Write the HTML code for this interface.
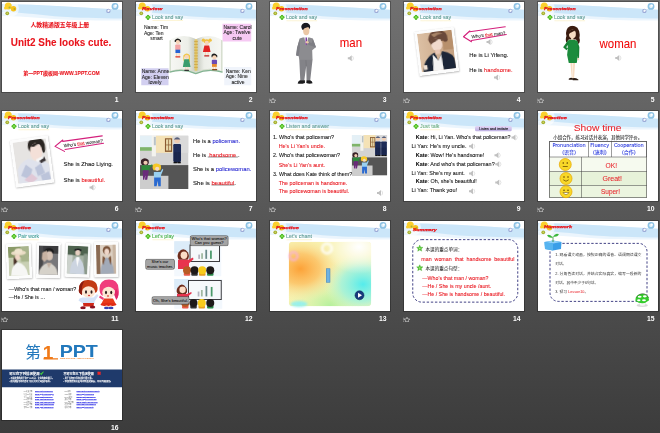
<!DOCTYPE html>
<html lang="en"><head><meta charset="utf-8"><title>Unit2 She looks cute - slide sorter</title>
<style>
html,body{margin:0;padding:0}
html{background:#3c3c3c}
body{width:660px;height:433px;overflow:hidden;position:relative;background:linear-gradient(#717171,#3c3c3c);font-family:"Liberation Sans","Noto Sans CJK SC",sans-serif}
.s{position:absolute;width:120px;height:90px;background:#fff;overflow:hidden;box-shadow:0 0 0 1px rgba(0,0,0,.27)}
.in{position:absolute;left:0;top:0;width:480px;height:360px;transform:scale(.25);transform-origin:0 0;overflow:hidden}
.a{position:absolute}
.t{position:absolute;white-space:nowrap;line-height:1.16;transform-origin:0 50%;-webkit-text-stroke:.3px currentColor}
.n{position:absolute;width:57px;text-align:right;color:#fff;font:bold 6.8px "Liberation Sans",sans-serif;line-height:9px;opacity:.99}
.r{color:#e8141c}.b{color:#2424d0}
</style></head>
<body>
<div class="s" style="left:2px;top:2px"><div class="in"><svg class="a" style="left:0;top:0" width="480" height="110" viewBox="0 0 480 110"><path d="M0 8C160 10 320 22 480 31V74C380 74 300 73 240 70C160 65 100 58 0 56Z" fill="#ebf5fd"/><path d="M0 8C160 10 320 22 480 31V66C380 65 300 63 240 59C160 53 100 43 0 40Z" fill="#cbe6f9"/><circle cx="34" cy="26" r="34" fill="#fff" opacity=".6"/><circle cx="452" cy="17.500" r="10.500" fill="#dceefa" stroke="#8cc2e4" stroke-width="6.500"/><circle cx="455" cy="14" r="4.500" fill="#fff"/><circle cx="425.500" cy="35.500" r="6.500" fill="#eef4fb" stroke="#9aa8d6" stroke-width="4.500"/><circle cx="428" cy="33" r="3" fill="#fff"/><circle cx="25" cy="16" r="14" fill="#fbd02e"/><circle cx="46" cy="27" r="11" fill="#f7c21c"/><circle cx="14" cy="24" r="6" fill="#fbd02e"/><circle cx="30" cy="22" r="4" fill="#a9b43a"/><circle cx="50" cy="28" r="4" fill="#b8a830"/><circle cx="21" cy="45" r="7.500" fill="#a4b030"/><circle cx="21" cy="45" r="3" fill="#d4d870"/></svg><div class="t" style="left:114px;top:78.4px;font-size:23.5px;color:#e8141c;font-weight:bold;">人教精通版五年级上册</div><div class="t" style="left:35px;top:139.8px;font-size:40px;color:#e8141c;font-weight:bold;transform:scaleX(0.994);">Unit2 She looks cute.</div><div class="t" style="left:85px;top:275.4px;font-size:20px;color:#e8141c;font-weight:bold;transform:scaleX(0.998);">第一PPT模板网-WWW.1PPT.COM</div></div></div><div class="n" style="left:61.5px;top:95.1px">1</div>
<div class="s" style="left:136px;top:2px"><div class="in"><svg class="a" style="left:0;top:0" width="480" height="110" viewBox="0 0 480 110"><path d="M0 8C160 10 320 22 480 31V74C380 74 300 73 240 70C160 65 100 58 0 56Z" fill="#ebf5fd"/><path d="M0 8C160 10 320 22 480 31V66C380 65 300 63 240 59C160 53 100 43 0 40Z" fill="#cbe6f9"/><circle cx="34" cy="26" r="34" fill="#fff" opacity=".6"/><circle cx="452" cy="17.500" r="10.500" fill="#dceefa" stroke="#8cc2e4" stroke-width="6.500"/><circle cx="455" cy="14" r="4.500" fill="#fff"/><circle cx="425.500" cy="35.500" r="6.500" fill="#eef4fb" stroke="#9aa8d6" stroke-width="4.500"/><circle cx="428" cy="33" r="3" fill="#fff"/><circle cx="25" cy="16" r="14" fill="#fbd02e"/><circle cx="46" cy="27" r="11" fill="#f7c21c"/><circle cx="14" cy="24" r="6" fill="#fbd02e"/><circle cx="30" cy="22" r="4" fill="#a9b43a"/><circle cx="50" cy="28" r="4" fill="#b8a830"/><circle cx="21" cy="45" r="7.500" fill="#a4b030"/><circle cx="21" cy="45" r="3" fill="#d4d870"/></svg><div class="t" style="left:24px;top:17.4px;font-size:14px;color:#e8141c;font-weight:bold;font-style:italic;transform:scaleX(1.679);-webkit-text-stroke:1px #e8141c;">Review</div><svg class="a" style="left:37px;top:50px" width="22" height="22" viewBox="0 0 22 22"><circle cx="11" cy="5.500" r="5" fill="#52be28"/><circle cx="11" cy="16.500" r="5" fill="#52be28"/><circle cx="5.500" cy="11" r="5" fill="#52be28"/><circle cx="16.500" cy="11" r="5" fill="#52be28"/><circle cx="11" cy="11" r="4" fill="#8be05a"/></svg><div class="t" style="left:64px;top:49.8px;font-size:21px;color:#5c9a92;transform:scaleX(0.993);border-bottom:2px dotted #f2d256;padding-bottom:0px;">Look and say</div><div class="a" style="left:346px;top:87px;width:115px;height:71px;background:#f6c9f3;"></div><div class="a" style="left:21px;top:265px;width:109px;height:68px;background:#d2cff0;"></div><div class="a" style="left:353px;top:260px;width:108px;height:73px;background:#f0f4fb;"></div><div class="t" style="left:32px;top:90px;font-size:20px;line-height:22px;color:#222;width:100px">Name: Tim<br>Age: Ten<br><span style="display:block;text-align:center">smart</span></div><div class="t" style="left:350px;top:89px;font-size:20px;line-height:22px;color:#222;width:110px">Name: Carol<br>Age: Twelve<br><span style="display:block;text-align:center">cute</span></div><div class="t" style="left:23px;top:267px;font-size:20px;line-height:22px;color:#222;width:106px">Name: Anne<br>Age: Eleven<br><span style="display:block;text-align:center">lovely</span></div><div class="t" style="left:359px;top:264px;font-size:20px;line-height:22px;color:#222;width:98px">Name: Ken<br>Age: Nine<br><span style="display:block;text-align:center">active</span></div><svg class="a" style="left:131px;top:120px" width="218" height="174" viewBox="0 0 226 182"><defs><linearGradient id="pl" x1="0" x2="1"><stop offset="0" stop-color="#f6f7f3"/><stop offset=".7" stop-color="#eceee8"/><stop offset="1" stop-color="#c6cac0"/></linearGradient><linearGradient id="pr" x1="1" x2="0"><stop offset="0" stop-color="#f6f7f3"/><stop offset=".7" stop-color="#eceee8"/><stop offset="1" stop-color="#c6cac0"/></linearGradient></defs><path d="M2 36Q60 6 112 32Q166 6 224 36V170Q166 152 112 176Q60 152 2 170Z" fill="#d4dccc"/><path d="M8 30Q62 4 110 28V164Q60 144 8 162Z" fill="url(#pl)"/><path d="M218 30Q164 4 116 28V164Q166 144 218 162Z" fill="url(#pr)"/><path d="M2 168Q60 150 112 174Q166 150 224 168" fill="none" stroke="#84b494" stroke-width="5"/><rect x="107" y="30" width="12" height="132" rx="3" fill="#e4c868"/><path d="M105 40h16M105 52h16M105 64h16M105 76h16M105 88h16M105 100h16M105 112h16M105 124h16M105 136h16M105 148h16" stroke="#c8a040" stroke-width="3"/><path d="M24 34Q36 20 50 34V42H24Z" fill="#1c1c1c"/><circle cx="37" cy="42" r="9" fill="#f8d4b8"/><rect x="26" y="52" width="22" height="24" rx="4" fill="#f2a4a4"/><rect x="27" y="74" width="20" height="14" fill="#2462d4"/><rect x="30" y="88" width="5" height="14" fill="#f8d4b8"/><rect x="40" y="88" width="5" height="14" fill="#f8d4b8"/><rect x="26" y="101" width="22" height="6" rx="3" fill="#e03020"/><path d="M60 98Q74 82 88 98V124H82V104H64V120H60Z" fill="#f0c848"/><circle cx="74" cy="104" r="9" fill="#f8d4b8"/><path d="M64 114H84L90 146H58Z" fill="#3a9c6c"/><rect x="68" y="146" width="4" height="14" fill="#f8d4b8"/><rect x="77" y="146" width="4" height="14" fill="#f8d4b8"/><rect x="64" y="158" width="20" height="5" rx="2" fill="#333"/><circle cx="144" cy="34" r="7" fill="#f0c040"/><circle cx="172" cy="34" r="7" fill="#f0c040"/><path d="M146 36Q158 24 170 36V46H146Z" fill="#f0c040"/><circle cx="158" cy="46" r="9" fill="#f8d4b8"/><path d="M148 56H168L174 84H142Z" fill="#e22424"/><rect x="150" y="84" width="5" height="14" fill="#f8d4b8"/><rect x="161" y="84" width="5" height="14" fill="#f8d4b8"/><rect x="147" y="97" width="22" height="5" rx="2" fill="#c02020"/><path d="M178 96Q190 84 202 98V106H178Z" fill="#1c1c1c"/><circle cx="190" cy="106" r="9" fill="#f8d4b8"/><rect x="179" y="116" width="22" height="20" rx="4" fill="#6c4cb4"/><rect x="180" y="134" width="20" height="12" fill="#e88a2c"/><rect x="183" y="146" width="5" height="10" fill="#f8d4b8"/><rect x="193" y="146" width="5" height="10" fill="#f8d4b8"/><rect x="180" y="155" width="22" height="5" rx="2" fill="#8a4a20"/></svg></div></div><div class="n" style="left:195.5px;top:95.1px">2</div>
<div class="s" style="left:270px;top:2px"><div class="in"><svg class="a" style="left:0;top:0" width="480" height="110" viewBox="0 0 480 110"><path d="M0 8C160 10 320 22 480 31V74C380 74 300 73 240 70C160 65 100 58 0 56Z" fill="#ebf5fd"/><path d="M0 8C160 10 320 22 480 31V66C380 65 300 63 240 59C160 53 100 43 0 40Z" fill="#cbe6f9"/><circle cx="34" cy="26" r="34" fill="#fff" opacity=".6"/><circle cx="452" cy="17.500" r="10.500" fill="#dceefa" stroke="#8cc2e4" stroke-width="6.500"/><circle cx="455" cy="14" r="4.500" fill="#fff"/><circle cx="425.500" cy="35.500" r="6.500" fill="#eef4fb" stroke="#9aa8d6" stroke-width="4.500"/><circle cx="428" cy="33" r="3" fill="#fff"/><circle cx="25" cy="16" r="14" fill="#fbd02e"/><circle cx="46" cy="27" r="11" fill="#f7c21c"/><circle cx="14" cy="24" r="6" fill="#fbd02e"/><circle cx="30" cy="22" r="4" fill="#a9b43a"/><circle cx="50" cy="28" r="4" fill="#b8a830"/><circle cx="21" cy="45" r="7.500" fill="#a4b030"/><circle cx="21" cy="45" r="3" fill="#d4d870"/></svg><div class="t" style="left:24px;top:17.4px;font-size:14px;color:#e8141c;font-weight:bold;font-style:italic;transform:scaleX(1.498);-webkit-text-stroke:1px #e8141c;">Presentation</div><svg class="a" style="left:37px;top:50px" width="22" height="22" viewBox="0 0 22 22"><circle cx="11" cy="5.500" r="5" fill="#52be28"/><circle cx="11" cy="16.500" r="5" fill="#52be28"/><circle cx="5.500" cy="11" r="5" fill="#52be28"/><circle cx="16.500" cy="11" r="5" fill="#52be28"/><circle cx="11" cy="11" r="4" fill="#8be05a"/></svg><div class="t" style="left:64px;top:49.8px;font-size:21px;color:#5c9a92;transform:scaleX(0.993);border-bottom:2px dotted #f2d256;padding-bottom:0px;">Look and say</div><svg class="a" style="left:100px;top:82px" width="86" height="248" viewBox="0 0 130 372"><ellipse cx="65" cy="24" rx="27" ry="24" fill="#1a1a20"/><ellipse cx="68" cy="48" rx="19" ry="27" fill="#ecc8a6"/><path d="M44 30Q60 8 92 26Q78 24 66 30Q54 32 46 46Z" fill="#1a1a20"/><path d="M28 96Q66 80 108 96L126 148 104 166 106 226H26L22 200 8 196 14 150Z" fill="#8c8c90"/><path d="M56 86H80L72 130H64Z" fill="#f6f6f6"/><path d="M64 90H72L74 128 68 136 63 128Z" fill="#7c3aa0"/><path d="M108 98 128 150 84 134 70 122 78 112 100 124Z" fill="#7e7e84"/><ellipse cx="74" cy="118" rx="9" ry="8" fill="#ecc8a6"/><path d="M28 98 12 152 6 198 22 202 30 150Z" fill="#7e7e84"/><path d="M26 224H106L92 350H70L68 262 56 350H32Z" fill="#838388"/><path d="M66 226 68 262" stroke="#6c6c70" stroke-width="3"/><path d="M30 348H60V364Q40 372 16 368Q18 352 30 348ZM70 348H92Q106 354 106 366Q86 372 68 364Z" fill="#1c1c1e"/></svg><div class="t" style="left:279px;top:138.3px;font-size:46px;color:#f00a0a;transform:scaleX(0.995) scaleY(1.1);">man</div><svg class="a" style="left:309px;top:212px" width="30" height="26" viewBox="0 0 30 26"><path d="M2 9h6l10-8v24l-10-8H2z" fill="#c0c0c0"/><path d="M21 4q8 9 0 18" fill="none" stroke="#d8d8d8" stroke-width="3"/></svg></div></div><div class="n" style="left:329.5px;top:95.1px">3</div><svg class="a" style="left:269px;top:97.8px" width="7" height="5.500" viewBox="0 0 14 11"><path d="M8 .5l1.700 3.500 3.800.4-2.800 2.600.8 3.800L8 8.800 4.500 10.800l.8-3.800L2.500 4.400l3.800-.4z" fill="none" stroke="#d8d8d8" stroke-width="1.300"/><path d="M0 2l3 1.500M0 5.500h2.500M0 9l2.500-1.200" stroke="#c8c8c8" stroke-width="1.100"/></svg>
<div class="s" style="left:404px;top:2px"><div class="in"><svg class="a" style="left:0;top:0" width="480" height="110" viewBox="0 0 480 110"><path d="M0 8C160 10 320 22 480 31V74C380 74 300 73 240 70C160 65 100 58 0 56Z" fill="#ebf5fd"/><path d="M0 8C160 10 320 22 480 31V66C380 65 300 63 240 59C160 53 100 43 0 40Z" fill="#cbe6f9"/><circle cx="34" cy="26" r="34" fill="#fff" opacity=".6"/><circle cx="452" cy="17.500" r="10.500" fill="#dceefa" stroke="#8cc2e4" stroke-width="6.500"/><circle cx="455" cy="14" r="4.500" fill="#fff"/><circle cx="425.500" cy="35.500" r="6.500" fill="#eef4fb" stroke="#9aa8d6" stroke-width="4.500"/><circle cx="428" cy="33" r="3" fill="#fff"/><circle cx="25" cy="16" r="14" fill="#fbd02e"/><circle cx="46" cy="27" r="11" fill="#f7c21c"/><circle cx="14" cy="24" r="6" fill="#fbd02e"/><circle cx="30" cy="22" r="4" fill="#a9b43a"/><circle cx="50" cy="28" r="4" fill="#b8a830"/><circle cx="21" cy="45" r="7.500" fill="#a4b030"/><circle cx="21" cy="45" r="3" fill="#d4d870"/></svg><div class="t" style="left:24px;top:17.4px;font-size:14px;color:#e8141c;font-weight:bold;font-style:italic;transform:scaleX(1.498);-webkit-text-stroke:1px #e8141c;">Presentation</div><svg class="a" style="left:37px;top:50px" width="22" height="22" viewBox="0 0 22 22"><circle cx="11" cy="5.500" r="5" fill="#52be28"/><circle cx="11" cy="16.500" r="5" fill="#52be28"/><circle cx="5.500" cy="11" r="5" fill="#52be28"/><circle cx="16.500" cy="11" r="5" fill="#52be28"/><circle cx="11" cy="11" r="4" fill="#8be05a"/></svg><div class="t" style="left:64px;top:49.8px;font-size:21px;color:#5c9a92;transform:scaleX(0.993);border-bottom:2px dotted #f2d256;padding-bottom:0px;">Look and say</div><div class="a" style="left:50.5px;top:109.0px;width:159px;height:178px;background:#fcfcfc;box-shadow:1px 3px 7px rgba(0,0,0,.32);transform:rotate(-7.1deg)"><svg style="position:absolute;left:10px;top:10px" width="139" height="154" viewBox="0 0 100 120" preserveAspectRatio="none"><defs><filter id="b4"><feGaussianBlur stdDeviation="1.8"/></filter><linearGradient id="l4" x1="0" x2="1"><stop offset="0" stop-color="#dcc0a4"/><stop offset="1" stop-color="#c4a080"/></linearGradient></defs><rect width="100" height="120" fill="url(#l4)"/><g filter="url(#b4)"><rect x="70" y="0" width="30" height="60" fill="#b8906c"/><path d="M30 22Q34 -6 62 -4Q90 0 86 30Q80 40 72 30L40 34Q34 40 30 22Z" fill="#6a4a3a"/><path d="M40 8Q56 -2 74 8Q60 6 48 16Z" fill="#a88468"/><ellipse cx="53" cy="40" rx="16" ry="20" fill="#f1d9cc"/><path d="M36 28Q50 14 72 24Q60 22 50 30Q42 32 36 40Z" fill="#6a4a3a"/><rect x="46" y="56" width="14" height="14" fill="#e8c8b6"/><path d="M6 124Q6 82 44 64L52 90 66 62Q100 72 100 100V124Z" fill="#1b2838"/><path d="M38 70 34 124H64L62 72 52 90Z" fill="#f4f4f4"/><rect x="8" y="100" width="10" height="14" fill="#f1e4d8"/></g></svg></div><svg class="a" style="left:0;top:0" width="480" height="360" viewBox="0 0 480 360"><path d="M263 116L238 139L270 159M263 119L405 99M270 154L409 130" fill="none" stroke="#d4207c" stroke-width="4.500" stroke-linecap="round" stroke-linejoin="round"/></svg><div class="t" style="left:270px;top:128.5px;font-size:18px;color:#222;transform:rotate(-6.5deg) scaleX(1.011);transform-origin:0 50%">Who's <span class="r" style="text-decoration:underline">that</span> man?</div><svg class="a" style="left:328px;top:147px" width="30" height="26" viewBox="0 0 30 26"><path d="M2 9h6l10-8v24l-10-8H2z" fill="#c0c0c0"/><path d="M21 4q8 9 0 18" fill="none" stroke="#d8d8d8" stroke-width="3"/></svg><div class="t" style="left:261px;top:198.5px;font-size:23.3px;color:#111;transform:scaleX(1.010);">He is Li Yifeng.</div><div class="t" style="left:261px;top:258.5px;font-size:23.3px;color:#111;transform:scaleX(0.990);">He is <span class="r">handsome.</span></div><svg class="a" style="left:358px;top:289px" width="30" height="26" viewBox="0 0 30 26"><path d="M2 9h6l10-8v24l-10-8H2z" fill="#c0c0c0"/><path d="M21 4q8 9 0 18" fill="none" stroke="#d8d8d8" stroke-width="3"/></svg></div></div><div class="n" style="left:463.5px;top:95.1px">4</div><svg class="a" style="left:403px;top:97.8px" width="7" height="5.500" viewBox="0 0 14 11"><path d="M8 .5l1.700 3.500 3.800.4-2.800 2.600.8 3.800L8 8.800 4.500 10.800l.8-3.800L2.500 4.400l3.800-.4z" fill="none" stroke="#d8d8d8" stroke-width="1.300"/><path d="M0 2l3 1.500M0 5.500h2.500M0 9l2.500-1.200" stroke="#c8c8c8" stroke-width="1.100"/></svg>
<div class="s" style="left:538px;top:2px"><div class="in"><svg class="a" style="left:0;top:0" width="480" height="110" viewBox="0 0 480 110"><path d="M0 8C160 10 320 22 480 31V74C380 74 300 73 240 70C160 65 100 58 0 56Z" fill="#ebf5fd"/><path d="M0 8C160 10 320 22 480 31V66C380 65 300 63 240 59C160 53 100 43 0 40Z" fill="#cbe6f9"/><circle cx="34" cy="26" r="34" fill="#fff" opacity=".6"/><circle cx="452" cy="17.500" r="10.500" fill="#dceefa" stroke="#8cc2e4" stroke-width="6.500"/><circle cx="455" cy="14" r="4.500" fill="#fff"/><circle cx="425.500" cy="35.500" r="6.500" fill="#eef4fb" stroke="#9aa8d6" stroke-width="4.500"/><circle cx="428" cy="33" r="3" fill="#fff"/><circle cx="25" cy="16" r="14" fill="#fbd02e"/><circle cx="46" cy="27" r="11" fill="#f7c21c"/><circle cx="14" cy="24" r="6" fill="#fbd02e"/><circle cx="30" cy="22" r="4" fill="#a9b43a"/><circle cx="50" cy="28" r="4" fill="#b8a830"/><circle cx="21" cy="45" r="7.500" fill="#a4b030"/><circle cx="21" cy="45" r="3" fill="#d4d870"/></svg><div class="t" style="left:24px;top:17.4px;font-size:14px;color:#e8141c;font-weight:bold;font-style:italic;transform:scaleX(1.498);-webkit-text-stroke:1px #e8141c;">Presentation</div><svg class="a" style="left:37px;top:50px" width="22" height="22" viewBox="0 0 22 22"><circle cx="11" cy="5.500" r="5" fill="#52be28"/><circle cx="11" cy="16.500" r="5" fill="#52be28"/><circle cx="5.500" cy="11" r="5" fill="#52be28"/><circle cx="16.500" cy="11" r="5" fill="#52be28"/><circle cx="11" cy="11" r="4" fill="#8be05a"/></svg><div class="t" style="left:64px;top:49.8px;font-size:21px;color:#5c9a92;transform:scaleX(0.993);border-bottom:2px dotted #f2d256;padding-bottom:0px;">Look and say</div><svg class="a" style="left:96px;top:94px" width="74" height="222" viewBox="0 0 110 335"><path d="M34 14Q60 -10 92 14Q112 40 104 76Q112 96 98 112L84 84H40L26 104Q18 84 26 64Q18 36 34 14Z" fill="#3a1c10"/><ellipse cx="62" cy="52" rx="21" ry="26" fill="#f8dcc2"/><path d="M38 40Q52 14 86 34Q70 32 58 40Q46 42 40 56Z" fill="#3a1c10"/><rect x="54" y="74" width="14" height="16" fill="#f8dcc2"/><path d="M32 90Q62 80 92 92L100 130 96 180 88 226H40L30 178 34 140Z" fill="#1c8c3c"/><path d="M34 92 6 132 26 150 36 138 24 132 40 110Z" fill="#178034"/><path d="M90 92 104 130 102 196 94 196 94 132Z" fill="#178034"/><ellipse cx="98" cy="202" rx="5" ry="8" fill="#f8dcc2"/><path d="M50 226H62L64 318H58ZM66 226H78L72 318H66Z" fill="#f8dcc2"/><path d="M40 322Q52 312 64 318V328H40ZM64 318Q80 314 98 326V330H64Z" fill="#2a1a12"/></svg><div class="t" style="left:246px;top:139.3px;font-size:46px;color:#f00a0a;transform:scaleX(0.998) scaleY(1.1);">woman</div><svg class="a" style="left:307px;top:211px" width="30" height="26" viewBox="0 0 30 26"><path d="M2 9h6l10-8v24l-10-8H2z" fill="#c0c0c0"/><path d="M21 4q8 9 0 18" fill="none" stroke="#d8d8d8" stroke-width="3"/></svg></div></div><div class="n" style="left:597.5px;top:95.1px">5</div><svg class="a" style="left:537px;top:97.8px" width="7" height="5.500" viewBox="0 0 14 11"><path d="M8 .5l1.700 3.500 3.800.4-2.800 2.600.8 3.800L8 8.800 4.500 10.800l.8-3.800L2.500 4.400l3.800-.4z" fill="none" stroke="#d8d8d8" stroke-width="1.300"/><path d="M0 2l3 1.500M0 5.500h2.500M0 9l2.500-1.200" stroke="#c8c8c8" stroke-width="1.100"/></svg>
<div class="s" style="left:2px;top:111px"><div class="in"><svg class="a" style="left:0;top:0" width="480" height="110" viewBox="0 0 480 110"><path d="M0 8C160 10 320 22 480 31V74C380 74 300 73 240 70C160 65 100 58 0 56Z" fill="#ebf5fd"/><path d="M0 8C160 10 320 22 480 31V66C380 65 300 63 240 59C160 53 100 43 0 40Z" fill="#cbe6f9"/><circle cx="34" cy="26" r="34" fill="#fff" opacity=".6"/><circle cx="452" cy="17.500" r="10.500" fill="#dceefa" stroke="#8cc2e4" stroke-width="6.500"/><circle cx="455" cy="14" r="4.500" fill="#fff"/><circle cx="425.500" cy="35.500" r="6.500" fill="#eef4fb" stroke="#9aa8d6" stroke-width="4.500"/><circle cx="428" cy="33" r="3" fill="#fff"/><circle cx="25" cy="16" r="14" fill="#fbd02e"/><circle cx="46" cy="27" r="11" fill="#f7c21c"/><circle cx="14" cy="24" r="6" fill="#fbd02e"/><circle cx="30" cy="22" r="4" fill="#a9b43a"/><circle cx="50" cy="28" r="4" fill="#b8a830"/><circle cx="21" cy="45" r="7.500" fill="#a4b030"/><circle cx="21" cy="45" r="3" fill="#d4d870"/></svg><div class="t" style="left:24px;top:17.4px;font-size:14px;color:#e8141c;font-weight:bold;font-style:italic;transform:scaleX(1.498);-webkit-text-stroke:1px #e8141c;">Presentation</div><svg class="a" style="left:37px;top:50px" width="22" height="22" viewBox="0 0 22 22"><circle cx="11" cy="5.500" r="5" fill="#52be28"/><circle cx="11" cy="16.500" r="5" fill="#52be28"/><circle cx="5.500" cy="11" r="5" fill="#52be28"/><circle cx="16.500" cy="11" r="5" fill="#52be28"/><circle cx="11" cy="11" r="4" fill="#8be05a"/></svg><div class="t" style="left:64px;top:49.8px;font-size:21px;color:#5c9a92;transform:scaleX(0.993);border-bottom:2px dotted #f2d256;padding-bottom:0px;">Look and say</div><div class="a" style="left:43.0px;top:106.6px;width:154px;height:190px;background:#fcfcfc;box-shadow:1px 3px 7px rgba(0,0,0,.32);transform:rotate(-7.8deg)"><svg style="position:absolute;left:10px;top:10px" width="134" height="166" viewBox="0 0 100 120" preserveAspectRatio="none"><defs><filter id="b6"><feGaussianBlur stdDeviation="1.8"/></filter></defs><rect width="100" height="120" fill="#e6e4e2"/><g filter="url(#b6)"><path d="M44 14Q48 -8 74 -6Q98 -2 94 30Q92 44 86 40L80 16Q64 10 54 20L52 36Q42 30 44 14Z" fill="#2b2523"/><ellipse cx="66" cy="36" rx="18" ry="26" fill="#f4e0d8"/><path d="M50 18Q64 4 88 14Q74 12 62 20Z" fill="#2b2523"/><path d="M4 124V80Q14 60 40 52L60 62 78 58 100 76V124Z" fill="#dfe2ec"/><path d="M12 98 30 68 48 84 36 112ZM56 80 76 70 84 98 62 106ZM70 104 96 96 100 120 74 124Z" fill="#bcc4da"/><path d="M20 112 44 96 60 112 40 124Z" fill="#e0c8d6"/><path d="M70 60 88 52 92 64 76 70Z" fill="#3a3438"/><path d="M62 58 84 50 86 56 66 66Z" fill="#f6f6f6"/></g></svg></div><svg class="a" style="left:0;top:0" width="480" height="360" viewBox="0 0 480 360"><path d="M243 116L212 141.5L250 161.5M243 121.5L401 99.6M252 154L406 129" fill="none" stroke="#d4207c" stroke-width="4.500" stroke-linecap="round" stroke-linejoin="round"/></svg><div class="t" style="left:247px;top:128.5px;font-size:18px;color:#222;transform:rotate(-7.3deg) scaleX(0.997);transform-origin:0 50%">Who's <span class="r" style="text-decoration:underline">that</span> woman?</div><div class="t" style="left:246px;top:198.5px;font-size:23.3px;color:#111;transform:scaleX(0.999);">She is Zhao Liying.</div><div class="t" style="left:246px;top:262.5px;font-size:23.3px;color:#111;transform:scaleX(1.007);">She is <span class="r">beautiful.</span></div><svg class="a" style="left:348px;top:293px" width="30" height="26" viewBox="0 0 30 26"><path d="M2 9h6l10-8v24l-10-8H2z" fill="#c0c0c0"/><path d="M21 4q8 9 0 18" fill="none" stroke="#d8d8d8" stroke-width="3"/></svg></div></div><div class="n" style="left:61.5px;top:204.1px">6</div><svg class="a" style="left:1px;top:206.8px" width="7" height="5.500" viewBox="0 0 14 11"><path d="M8 .5l1.700 3.500 3.800.4-2.800 2.600.8 3.800L8 8.800 4.500 10.800l.8-3.800L2.500 4.400l3.800-.4z" fill="none" stroke="#d8d8d8" stroke-width="1.300"/><path d="M0 2l3 1.500M0 5.500h2.500M0 9l2.500-1.200" stroke="#c8c8c8" stroke-width="1.100"/></svg>
<div class="s" style="left:136px;top:111px"><div class="in"><svg class="a" style="left:0;top:0" width="480" height="110" viewBox="0 0 480 110"><path d="M0 8C160 10 320 22 480 31V74C380 74 300 73 240 70C160 65 100 58 0 56Z" fill="#ebf5fd"/><path d="M0 8C160 10 320 22 480 31V66C380 65 300 63 240 59C160 53 100 43 0 40Z" fill="#cbe6f9"/><circle cx="34" cy="26" r="34" fill="#fff" opacity=".6"/><circle cx="452" cy="17.500" r="10.500" fill="#dceefa" stroke="#8cc2e4" stroke-width="6.500"/><circle cx="455" cy="14" r="4.500" fill="#fff"/><circle cx="425.500" cy="35.500" r="6.500" fill="#eef4fb" stroke="#9aa8d6" stroke-width="4.500"/><circle cx="428" cy="33" r="3" fill="#fff"/><circle cx="25" cy="16" r="14" fill="#fbd02e"/><circle cx="46" cy="27" r="11" fill="#f7c21c"/><circle cx="14" cy="24" r="6" fill="#fbd02e"/><circle cx="30" cy="22" r="4" fill="#a9b43a"/><circle cx="50" cy="28" r="4" fill="#b8a830"/><circle cx="21" cy="45" r="7.500" fill="#a4b030"/><circle cx="21" cy="45" r="3" fill="#d4d870"/></svg><div class="t" style="left:24px;top:17.4px;font-size:14px;color:#e8141c;font-weight:bold;font-style:italic;transform:scaleX(1.498);-webkit-text-stroke:1px #e8141c;">Presentation</div><svg class="a" style="left:37px;top:50px" width="22" height="22" viewBox="0 0 22 22"><circle cx="11" cy="5.500" r="5" fill="#52be28"/><circle cx="11" cy="16.500" r="5" fill="#52be28"/><circle cx="5.500" cy="11" r="5" fill="#52be28"/><circle cx="16.500" cy="11" r="5" fill="#52be28"/><circle cx="11" cy="11" r="4" fill="#8be05a"/></svg><div class="t" style="left:64px;top:49.8px;font-size:21px;color:#5c9a92;transform:scaleX(0.993);border-bottom:2px dotted #f2d256;padding-bottom:0px;">Look and say</div><svg class="a" style="left:16px;top:98px" width="194" height="214" viewBox="0 0 350 385" preserveAspectRatio="none"><rect width="350" height="385" fill="#d3d3d3"/><rect x="115" width="135" height="125" fill="#f4e2b6"/><rect x="235" width="115" height="125" fill="#dadada"/><rect width="88" height="110" fill="#e4f0f6"/><rect y="84" width="88" height="26" fill="#7fb46a"/><rect x="85" width="30" height="150" fill="#f3f3ee"/><rect x="100" y="10" width="14" height="60" fill="#b9c2c6"/><rect x="180" y="20" width="52" height="98" fill="#8a5a30"/><rect x="188" y="28" width="36" height="80" fill="#e6d8a8"/><path d="M206 28V108M188 68H224" stroke="#8a5a30" stroke-width="5"/><rect y="213" width="350" height="172" fill="#555"/><rect y="290" width="205" height="95" fill="#cdcdcd"/><rect x="240" y="62" width="56" height="128" rx="8" fill="#1e2c58"/><rect x="246" y="120" width="20" height="78" fill="#1a264c"/><rect x="270" y="120" width="20" height="78" fill="#1a264c"/><circle cx="268" cy="36" r="20" fill="#f0cdb2"/><path d="M244 28Q268 -2 292 28Z" fill="#56607c"/><rect x="242" y="190" width="24" height="10" fill="#111"/><rect x="270" y="190" width="24" height="10" fill="#111"/><path d="M8 176Q34 150 62 176Q68 200 56 212H14Q2 200 8 176Z" fill="#3a2228"/><circle cx="40" cy="196" r="15" fill="#f0cdb2"/><path d="M10 214H74L88 206 90 216 70 234V252H12Z" fill="#2f8a3c"/><path d="M20 250H64L52 318H36L40 280 30 318H22Z" fill="#6a2a7a"/><path d="M92 212Q122 190 150 214Q156 236 146 250H98Q86 236 92 212Z" fill="#f6c828"/><circle cx="124" cy="240" r="15" fill="#f6d8c0"/><path d="M100 262H148L162 240 168 246 152 284V304H100Z" fill="#9ad0f0"/><path d="M102 302H150V366H132L128 326 120 366H102Z" fill="#2a6ad0"/></svg><div class="t" style="left:228px;top:104.7px;font-size:23px;color:#111;transform:scaleX(0.994);">He is a <span class="b">policeman.</span></div><div class="t" style="left:228px;top:160.7px;font-size:23px;color:#111;transform:scaleX(1.003);">He is <span class="r" style="text-decoration:underline #222 2px">&nbsp;handsome&nbsp;</span>.</div><div class="t" style="left:228px;top:218.7px;font-size:23px;color:#111;transform:scaleX(1.013);">She is a <span class="b">policewoman.</span></div><div class="t" style="left:228px;top:272.7px;font-size:23px;color:#111;transform:scaleX(1.051);">She is <span class="r" style="text-decoration:underline #222 2px">beautiful</span>.</div></div></div><div class="n" style="left:195.5px;top:204.1px">7</div><svg class="a" style="left:135px;top:206.8px" width="7" height="5.500" viewBox="0 0 14 11"><path d="M8 .5l1.700 3.500 3.800.4-2.800 2.600.8 3.800L8 8.800 4.500 10.800l.8-3.800L2.500 4.400l3.800-.4z" fill="none" stroke="#d8d8d8" stroke-width="1.300"/><path d="M0 2l3 1.500M0 5.500h2.500M0 9l2.500-1.200" stroke="#c8c8c8" stroke-width="1.100"/></svg>
<div class="s" style="left:270px;top:111px"><div class="in"><svg class="a" style="left:0;top:0" width="480" height="110" viewBox="0 0 480 110"><path d="M0 8C160 10 320 22 480 31V74C380 74 300 73 240 70C160 65 100 58 0 56Z" fill="#ebf5fd"/><path d="M0 8C160 10 320 22 480 31V66C380 65 300 63 240 59C160 53 100 43 0 40Z" fill="#cbe6f9"/><circle cx="34" cy="26" r="34" fill="#fff" opacity=".6"/><circle cx="452" cy="17.500" r="10.500" fill="#dceefa" stroke="#8cc2e4" stroke-width="6.500"/><circle cx="455" cy="14" r="4.500" fill="#fff"/><circle cx="425.500" cy="35.500" r="6.500" fill="#eef4fb" stroke="#9aa8d6" stroke-width="4.500"/><circle cx="428" cy="33" r="3" fill="#fff"/><circle cx="25" cy="16" r="14" fill="#fbd02e"/><circle cx="46" cy="27" r="11" fill="#f7c21c"/><circle cx="14" cy="24" r="6" fill="#fbd02e"/><circle cx="30" cy="22" r="4" fill="#a9b43a"/><circle cx="50" cy="28" r="4" fill="#b8a830"/><circle cx="21" cy="45" r="7.500" fill="#a4b030"/><circle cx="21" cy="45" r="3" fill="#d4d870"/></svg><div class="t" style="left:24px;top:17.4px;font-size:14px;color:#e8141c;font-weight:bold;font-style:italic;transform:scaleX(1.498);-webkit-text-stroke:1px #e8141c;">Presentation</div><svg class="a" style="left:37px;top:50px" width="22" height="22" viewBox="0 0 22 22"><circle cx="11" cy="5.500" r="5" fill="#52be28"/><circle cx="11" cy="16.500" r="5" fill="#52be28"/><circle cx="5.500" cy="11" r="5" fill="#52be28"/><circle cx="16.500" cy="11" r="5" fill="#52be28"/><circle cx="11" cy="11" r="4" fill="#8be05a"/></svg><div class="t" style="left:64px;top:49.8px;font-size:21px;color:#5c9a92;transform:scaleX(1.009);border-bottom:2px dotted #f2d256;padding-bottom:0px;">Listen and answer</div><svg class="a" style="left:327px;top:96px" width="142" height="162" viewBox="0 0 350 385" preserveAspectRatio="none"><rect width="350" height="385" fill="#d3d3d3"/><rect x="115" width="135" height="125" fill="#f4e2b6"/><rect x="235" width="115" height="125" fill="#dadada"/><rect width="88" height="110" fill="#e4f0f6"/><rect y="84" width="88" height="26" fill="#7fb46a"/><rect x="85" width="30" height="150" fill="#f3f3ee"/><rect x="100" y="10" width="14" height="60" fill="#b9c2c6"/><rect x="180" y="20" width="52" height="98" fill="#8a5a30"/><rect x="188" y="28" width="36" height="80" fill="#e6d8a8"/><path d="M206 28V108M188 68H224" stroke="#8a5a30" stroke-width="5"/><rect y="213" width="350" height="172" fill="#555"/><rect y="290" width="205" height="95" fill="#cdcdcd"/><rect x="230" y="62" width="56" height="128" rx="8" fill="#1e2c58"/><rect x="236" y="120" width="20" height="78" fill="#1a264c"/><rect x="260" y="120" width="20" height="78" fill="#1a264c"/><circle cx="258" cy="36" r="20" fill="#f0cdb2"/><path d="M234 28Q258 -2 282 28Z" fill="#56607c"/><rect x="232" y="190" width="24" height="10" fill="#111"/><rect x="260" y="190" width="24" height="10" fill="#111"/><rect x="290" y="62" width="56" height="128" rx="8" fill="#1e2c58"/><rect x="296" y="120" width="20" height="78" fill="#1a264c"/><rect x="320" y="120" width="20" height="78" fill="#1a264c"/><circle cx="318" cy="36" r="20" fill="#f0cdb2"/><path d="M294 28Q318 -2 342 28Z" fill="#56607c"/><rect x="292" y="190" width="24" height="10" fill="#111"/><rect x="320" y="190" width="24" height="10" fill="#111"/><path d="M8 176Q34 150 62 176Q68 200 56 212H14Q2 200 8 176Z" fill="#3a2228"/><circle cx="40" cy="196" r="15" fill="#f0cdb2"/><path d="M10 214H74L88 206 90 216 70 234V252H12Z" fill="#2f8a3c"/><path d="M20 250H64L52 318H36L40 280 30 318H22Z" fill="#6a2a7a"/><path d="M92 212Q122 190 150 214Q156 236 146 250H98Q86 236 92 212Z" fill="#f6c828"/><circle cx="124" cy="240" r="15" fill="#f6d8c0"/><path d="M100 262H148L162 240 168 246 152 284V304H100Z" fill="#9ad0f0"/><path d="M102 302H150V366H132L128 326 120 366H102Z" fill="#2a6ad0"/></svg><div class="t" style="left:12px;top:90.5px;font-size:21.5px;color:#111;transform:scaleX(1.014);">1. Who's that policeman?</div><div class="t" style="left:35px;top:129.5px;font-size:21.5px;color:#e8141c;transform:scaleX(0.997);">He's Li Yan's uncle.</div><div class="t" style="left:12px;top:164.5px;font-size:21.5px;color:#111;transform:scaleX(0.999);">2. Who's that policewoman?</div><div class="t" style="left:35px;top:204.5px;font-size:21.5px;color:#e8141c;transform:scaleX(0.991);">She's Li Yan's aunt.</div><div class="t" style="left:12px;top:241.5px;font-size:21.5px;color:#111;transform:scaleX(0.997);">3. What does Kate think of them?</div><div class="t" style="left:35px;top:277.5px;font-size:21.5px;color:#e8141c;transform:scaleX(0.997);">The policeman is handsome.</div><div class="t" style="left:35px;top:309.5px;font-size:21.5px;color:#e8141c;transform:scaleX(0.996);">The policewoman is beautiful.</div><svg class="a" style="left:426px;top:315px" width="30" height="26" viewBox="0 0 30 26"><path d="M2 9h6l10-8v24l-10-8H2z" fill="#c0c0c0"/><path d="M21 4q8 9 0 18" fill="none" stroke="#d8d8d8" stroke-width="3"/></svg></div></div><div class="n" style="left:329.5px;top:204.1px">8</div><svg class="a" style="left:269px;top:206.8px" width="7" height="5.500" viewBox="0 0 14 11"><path d="M8 .5l1.700 3.500 3.800.4-2.800 2.600.8 3.800L8 8.800 4.500 10.800l.8-3.800L2.500 4.400l3.800-.4z" fill="none" stroke="#d8d8d8" stroke-width="1.300"/><path d="M0 2l3 1.500M0 5.500h2.500M0 9l2.500-1.200" stroke="#c8c8c8" stroke-width="1.100"/></svg>
<div class="s" style="left:404px;top:111px"><div class="in"><svg class="a" style="left:0;top:0" width="480" height="110" viewBox="0 0 480 110"><path d="M0 8C160 10 320 22 480 31V74C380 74 300 73 240 70C160 65 100 58 0 56Z" fill="#ebf5fd"/><path d="M0 8C160 10 320 22 480 31V66C380 65 300 63 240 59C160 53 100 43 0 40Z" fill="#cbe6f9"/><circle cx="34" cy="26" r="34" fill="#fff" opacity=".6"/><circle cx="452" cy="17.500" r="10.500" fill="#dceefa" stroke="#8cc2e4" stroke-width="6.500"/><circle cx="455" cy="14" r="4.500" fill="#fff"/><circle cx="425.500" cy="35.500" r="6.500" fill="#eef4fb" stroke="#9aa8d6" stroke-width="4.500"/><circle cx="428" cy="33" r="3" fill="#fff"/><circle cx="25" cy="16" r="14" fill="#fbd02e"/><circle cx="46" cy="27" r="11" fill="#f7c21c"/><circle cx="14" cy="24" r="6" fill="#fbd02e"/><circle cx="30" cy="22" r="4" fill="#a9b43a"/><circle cx="50" cy="28" r="4" fill="#b8a830"/><circle cx="21" cy="45" r="7.500" fill="#a4b030"/><circle cx="21" cy="45" r="3" fill="#d4d870"/></svg><div class="t" style="left:24px;top:17.4px;font-size:14px;color:#e8141c;font-weight:bold;font-style:italic;transform:scaleX(1.498);-webkit-text-stroke:1px #e8141c;">Presentation</div><svg class="a" style="left:37px;top:50px" width="22" height="22" viewBox="0 0 22 22"><circle cx="11" cy="5.500" r="5" fill="#52be28"/><circle cx="11" cy="16.500" r="5" fill="#52be28"/><circle cx="5.500" cy="11" r="5" fill="#52be28"/><circle cx="16.500" cy="11" r="5" fill="#52be28"/><circle cx="11" cy="11" r="4" fill="#8be05a"/></svg><div class="t" style="left:64px;top:49.8px;font-size:21px;color:#6cae80;transform:scaleX(1.013);border-bottom:2px dotted #f2d256;padding-bottom:0px;">Just talk</div><div class="a" style="left:284px;top:60px;width:147px;height:21px;background:linear-gradient(#e4d8f6,#bcaee2);border-radius:6px;"></div><div class="t" style="left:300px;top:63.5px;font-size:13px;color:#111;transform:scaleX(1.139);">Listen and imitate</div><div class="t" style="left:47px;top:93.5px;font-size:21.5px;color:#111;transform:scaleX(1.000);"><b>Kate</b>: Hi, Li Yan. Who's that policeman?</div><svg class="a" style="left:428px;top:93px" width="30" height="26" viewBox="0 0 30 26"><path d="M2 9h6l10-8v24l-10-8H2z" fill="#c0c0c0"/><path d="M21 4q8 9 0 18" fill="none" stroke="#d8d8d8" stroke-width="3"/></svg><div class="t" style="left:30px;top:128.5px;font-size:21.5px;color:#111;transform:scaleX(1.042);">Li Yan: He's my uncle.</div><svg class="a" style="left:258px;top:128px" width="30" height="26" viewBox="0 0 30 26"><path d="M2 9h6l10-8v24l-10-8H2z" fill="#c0c0c0"/><path d="M21 4q8 9 0 18" fill="none" stroke="#d8d8d8" stroke-width="3"/></svg><div class="t" style="left:47px;top:164.5px;font-size:21.5px;color:#111;transform:scaleX(1.007);"><b>Kate</b>: Wow! He's handsome!</div><svg class="a" style="left:360px;top:164px" width="30" height="26" viewBox="0 0 30 26"><path d="M2 9h6l10-8v24l-10-8H2z" fill="#c0c0c0"/><path d="M21 4q8 9 0 18" fill="none" stroke="#d8d8d8" stroke-width="3"/></svg><div class="t" style="left:47px;top:200.5px;font-size:21.5px;color:#111;transform:scaleX(1.006);"><b>Kate</b>: And who's that policeman?</div><svg class="a" style="left:363px;top:200px" width="30" height="26" viewBox="0 0 30 26"><path d="M2 9h6l10-8v24l-10-8H2z" fill="#c0c0c0"/><path d="M21 4q8 9 0 18" fill="none" stroke="#d8d8d8" stroke-width="3"/></svg><div class="t" style="left:30px;top:235.5px;font-size:21.5px;color:#111;transform:scaleX(1.003);">Li Yan: She's my aunt.</div><svg class="a" style="left:258px;top:237px" width="30" height="26" viewBox="0 0 30 26"><path d="M2 9h6l10-8v24l-10-8H2z" fill="#c0c0c0"/><path d="M21 4q8 9 0 18" fill="none" stroke="#d8d8d8" stroke-width="3"/></svg><div class="t" style="left:47px;top:268.5px;font-size:21.5px;color:#111;transform:scaleX(1.010);"><b>Kate</b>: Oh, she's beautiful!</div><svg class="a" style="left:363px;top:273px" width="30" height="26" viewBox="0 0 30 26"><path d="M2 9h6l10-8v24l-10-8H2z" fill="#c0c0c0"/><path d="M21 4q8 9 0 18" fill="none" stroke="#d8d8d8" stroke-width="3"/></svg><div class="t" style="left:30px;top:305.5px;font-size:21.5px;color:#111;transform:scaleX(1.029);">Li Yan: Thank you!</div><svg class="a" style="left:258px;top:308px" width="30" height="26" viewBox="0 0 30 26"><path d="M2 9h6l10-8v24l-10-8H2z" fill="#c0c0c0"/><path d="M21 4q8 9 0 18" fill="none" stroke="#d8d8d8" stroke-width="3"/></svg></div></div><div class="n" style="left:463.5px;top:204.1px">9</div>
<div class="s" style="left:538px;top:111px"><div class="in"><svg class="a" style="left:0;top:0" width="480" height="110" viewBox="0 0 480 110"><path d="M0 8C160 10 320 22 480 31V74C380 74 300 73 240 70C160 65 100 58 0 56Z" fill="#ebf5fd"/><path d="M0 8C160 10 320 22 480 31V66C380 65 300 63 240 59C160 53 100 43 0 40Z" fill="#cbe6f9"/><circle cx="34" cy="26" r="34" fill="#fff" opacity=".6"/><circle cx="452" cy="17.500" r="10.500" fill="#dceefa" stroke="#8cc2e4" stroke-width="6.500"/><circle cx="455" cy="14" r="4.500" fill="#fff"/><circle cx="425.500" cy="35.500" r="6.500" fill="#eef4fb" stroke="#9aa8d6" stroke-width="4.500"/><circle cx="428" cy="33" r="3" fill="#fff"/><circle cx="25" cy="16" r="14" fill="#fbd02e"/><circle cx="46" cy="27" r="11" fill="#f7c21c"/><circle cx="14" cy="24" r="6" fill="#fbd02e"/><circle cx="30" cy="22" r="4" fill="#a9b43a"/><circle cx="50" cy="28" r="4" fill="#b8a830"/><circle cx="21" cy="45" r="7.500" fill="#a4b030"/><circle cx="21" cy="45" r="3" fill="#d4d870"/></svg><div class="t" style="left:24px;top:17.4px;font-size:14px;color:#e8141c;font-weight:bold;font-style:italic;transform:scaleX(1.689);-webkit-text-stroke:1px #e8141c;">Practice</div><div class="t" style="left:143px;top:48.9px;font-size:33px;color:#e8242c;transform:scaleX(1.240);font-family:"DejaVu Sans",sans-serif;-webkit-text-stroke:.2px;word-spacing:8px;letter-spacing:1px;">Show time</div><div class="t" style="left:61px;top:94.7px;font-size:17.8px;color:#111;transform:scaleX(1.000);-webkit-text-stroke:.15px #111;">小组合作，练习对话并表演，其他同学评价。</div><div class="a" style="left:46px;top:121px;width:389px;height:226px;background:#fff;border:2px solid #333;box-sizing:border-box;"></div><div class="a" style="left:46px;top:184px;width:389px;height:58px;background:#f6faef;"></div><div class="a" style="left:46px;top:242px;width:389px;height:57px;background:#e7f2d9;"></div><div class="a" style="left:46px;top:299px;width:389px;height:48px;background:#ecf5e0;"></div><div class="a" style="left:46px;top:121px;width:389px;height:2px;background:#3a3a3a;"></div><div class="a" style="left:46px;top:183px;width:389px;height:2px;background:#3a3a3a;"></div><div class="a" style="left:46px;top:241px;width:389px;height:2px;background:#3a3a3a;"></div><div class="a" style="left:46px;top:298px;width:389px;height:2px;background:#3a3a3a;"></div><div class="a" style="left:46px;top:345px;width:389px;height:2px;background:#3a3a3a;"></div><div class="a" style="left:46px;top:121px;width:2px;height:226px;background:#3a3a3a;"></div><div class="a" style="left:433px;top:121px;width:2px;height:226px;background:#3a3a3a;"></div><div class="a" style="left:201px;top:121px;width:2px;height:63px;background:#3a3a3a;"></div><div class="a" style="left:292px;top:121px;width:2px;height:63px;background:#3a3a3a;"></div><div class="a" style="left:174px;top:184px;width:2px;height:163px;background:#3a3a3a;"></div><div class="t" style="left:49.0px;top:124px;width:150px;text-align:center;font-size:20px;color:#2233dd;font-family:'DejaVu Sans','Noto Sans CJK SC',sans-serif;letter-spacing:-.3px">Pronunciation</div><div class="t" style="left:49.0px;top:154px;width:150px;text-align:center;font-size:20px;color:#2233dd;font-family:'DejaVu Sans','Noto Sans CJK SC',sans-serif;letter-spacing:-.3px">(语音)</div><div class="t" style="left:202.0px;top:124px;width:90px;text-align:center;font-size:20px;color:#2233dd;font-family:'DejaVu Sans','Noto Sans CJK SC',sans-serif;letter-spacing:-.3px">Fluency</div><div class="t" style="left:202.0px;top:154px;width:90px;text-align:center;font-size:20px;color:#2233dd;font-family:'DejaVu Sans','Noto Sans CJK SC',sans-serif;letter-spacing:-.3px">(流利)</div><div class="t" style="left:293.0px;top:124px;width:140px;text-align:center;font-size:20px;color:#2233dd;font-family:'DejaVu Sans','Noto Sans CJK SC',sans-serif;letter-spacing:-.3px">Cooperation</div><div class="t" style="left:293.0px;top:154px;width:140px;text-align:center;font-size:20px;color:#2233dd;font-family:'DejaVu Sans','Noto Sans CJK SC',sans-serif;letter-spacing:-.3px">(合作)</div><svg class="a" style="left:81px;top:186px" width="56" height="56" viewBox="-28 -28 56 56"><circle r="24" fill="#f8d828" stroke="#e8a800" stroke-width="3"/><circle cx="-8" cy="-6" r="3" fill="#5a3a00"/><circle cx="8" cy="-6" r="3" fill="#5a3a00"/><path d="M-10 8H10" stroke="#6a4a00" stroke-width="3"/></svg><svg class="a" style="left:84px;top:242px" width="56" height="56" viewBox="-28 -28 56 56"><circle r="24" fill="#f8d828" stroke="#e8a800" stroke-width="3"/><circle cx="-8" cy="-6" r="3" fill="#5a3a00"/><circle cx="8" cy="-6" r="3" fill="#5a3a00"/><path d="M-11 5Q0 17 11 5" fill="none" stroke="#6a4a00" stroke-width="3"/></svg><svg class="a" style="left:84px;top:295px" width="56" height="56" viewBox="-28 -28 56 56"><circle r="24" fill="#f8d828" stroke="#e8a800" stroke-width="3"/><circle cx="-8" cy="-6" r="3" fill="#5a3a00"/><circle cx="8" cy="-6" r="3" fill="#5a3a00"/><path d="M-12 3Q0 20 12 3Z" fill="#fff" stroke="#6a4a00" stroke-width="2"/></svg><div class="t" style="left:270px;top:201.9px;font-size:26px;color:#e8242c;transform:scaleX(1.027);font-family:"DejaVu Sans",sans-serif;">OK!</div><div class="t" style="left:258px;top:254.9px;font-size:26px;color:#e8242c;transform:scaleX(1.080);font-family:"DejaVu Sans",sans-serif;">Great!</div><div class="t" style="left:252px;top:308.9px;font-size:26px;color:#e8242c;transform:scaleX(0.992);font-family:"DejaVu Sans",sans-serif;">Super!</div></div></div><div class="n" style="left:597.5px;top:204.1px">10</div><svg class="a" style="left:537px;top:206.8px" width="7" height="5.500" viewBox="0 0 14 11"><path d="M8 .5l1.700 3.500 3.800.4-2.800 2.600.8 3.800L8 8.800 4.500 10.800l.8-3.800L2.500 4.400l3.800-.4z" fill="none" stroke="#d8d8d8" stroke-width="1.300"/><path d="M0 2l3 1.500M0 5.500h2.500M0 9l2.500-1.200" stroke="#c8c8c8" stroke-width="1.100"/></svg>
<div class="s" style="left:2px;top:221px"><div class="in"><svg class="a" style="left:0;top:0" width="480" height="110" viewBox="0 0 480 110"><path d="M0 8C160 10 320 22 480 31V74C380 74 300 73 240 70C160 65 100 58 0 56Z" fill="#ebf5fd"/><path d="M0 8C160 10 320 22 480 31V66C380 65 300 63 240 59C160 53 100 43 0 40Z" fill="#cbe6f9"/><circle cx="34" cy="26" r="34" fill="#fff" opacity=".6"/><circle cx="452" cy="17.500" r="10.500" fill="#dceefa" stroke="#8cc2e4" stroke-width="6.500"/><circle cx="455" cy="14" r="4.500" fill="#fff"/><circle cx="425.500" cy="35.500" r="6.500" fill="#eef4fb" stroke="#9aa8d6" stroke-width="4.500"/><circle cx="428" cy="33" r="3" fill="#fff"/><circle cx="25" cy="16" r="14" fill="#fbd02e"/><circle cx="46" cy="27" r="11" fill="#f7c21c"/><circle cx="14" cy="24" r="6" fill="#fbd02e"/><circle cx="30" cy="22" r="4" fill="#a9b43a"/><circle cx="50" cy="28" r="4" fill="#b8a830"/><circle cx="21" cy="45" r="7.500" fill="#a4b030"/><circle cx="21" cy="45" r="3" fill="#d4d870"/></svg><div class="t" style="left:24px;top:17.4px;font-size:14px;color:#e8141c;font-weight:bold;font-style:italic;transform:scaleX(1.689);-webkit-text-stroke:1px #e8141c;">Practice</div><svg class="a" style="left:37px;top:50px" width="22" height="22" viewBox="0 0 22 22"><circle cx="11" cy="5.500" r="5" fill="#52be28"/><circle cx="11" cy="16.500" r="5" fill="#52be28"/><circle cx="5.500" cy="11" r="5" fill="#52be28"/><circle cx="16.500" cy="11" r="5" fill="#52be28"/><circle cx="11" cy="11" r="4" fill="#8be05a"/></svg><div class="t" style="left:64px;top:49.8px;font-size:21px;color:#3e9c94;transform:scaleX(0.960);border-bottom:2px dotted #f2d256;padding-bottom:0px;">Pair work</div><div class="a" style="left:17px;top:91px;width:101px;height:140px;background:#fcfcfc;box-shadow:1px 2px 7px rgba(0,0,0,.35);transform:rotate(-2.5deg)"><svg style="position:absolute;left:9px;top:11px" width="83" height="116" viewBox="0 0 100 150" preserveAspectRatio="none"><defs><filter id="fa"><feGaussianBlur stdDeviation="2.200"/></filter></defs><rect width="100" height="150" fill="#c9d0b4"/><g filter="url(#fa)"><rect x="0" y="0" width="100" height="56" fill="#8a9a68"/><rect x="60" y="0" width="40" height="80" fill="#a8b48c"/><ellipse cx="50" cy="34" rx="36" ry="13" fill="#e9dcc4"/><ellipse cx="50" cy="24" rx="19" ry="14" fill="#efe4ce"/><ellipse cx="44" cy="56" rx="13" ry="15" fill="#f1d6c6"/><path d="M28 50Q20 96 30 120L42 76Z" fill="#4a3226"/><path d="M10 150Q12 98 44 82Q84 92 92 150Z" fill="#f6f6f4"/></g></svg></div><div class="a" style="left:138px;top:88px;width:96px;height:140px;background:#fcfcfc;box-shadow:1px 2px 7px rgba(0,0,0,.35);transform:rotate(1deg)"><svg style="position:absolute;left:9px;top:11px" width="78" height="116" viewBox="0 0 100 150" preserveAspectRatio="none"><defs><filter id="fb"><feGaussianBlur stdDeviation="2.200"/></filter></defs><rect width="100" height="150" fill="#77777a"/><g filter="url(#fb)"><rect x="0" y="0" width="100" height="40" fill="#3a3a3c"/><rect x="0" y="0" width="22" height="150" fill="#4a4a4c"/><ellipse cx="52" cy="30" rx="24" ry="18" fill="#1c1c1e"/><ellipse cx="54" cy="52" rx="18" ry="24" fill="#d6c2b4"/><path d="M18 36 40 26 46 66 30 84 16 70Z" fill="#c8b2a2"/><path d="M0 150Q6 100 50 88Q94 98 100 150Z" fill="#d6d2ca"/><path d="M40 88 52 116 66 88Z" fill="#c2b0a2"/></g></svg></div><div class="a" style="left:252px;top:89px;width:100px;height:136px;background:#fcfcfc;box-shadow:1px 2px 7px rgba(0,0,0,.35);transform:rotate(2.5deg)"><svg style="position:absolute;left:9px;top:11px" width="82" height="112" viewBox="0 0 100 150" preserveAspectRatio="none"><defs><filter id="fc"><feGaussianBlur stdDeviation="2.200"/></filter></defs><rect width="100" height="150" fill="#a4b0a2"/><g filter="url(#fc)"><rect x="0" y="0" width="100" height="50" fill="#4f6450"/><rect x="0" y="50" width="26" height="100" fill="#ccd2cc"/><rect x="80" y="40" width="20" height="110" fill="#8c9a8c"/><ellipse cx="50" cy="22" rx="18" ry="9" fill="#1e1e22"/><ellipse cx="50" cy="36" rx="12" ry="15" fill="#e6cfc0"/><path d="M14 150Q18 76 50 58Q84 76 86 150Z" fill="#ccd4e0"/><path d="M42 60 50 112 60 60Z" fill="#fbfbfb"/></g></svg></div><div class="a" style="left:368px;top:84px;width:97px;height:141px;background:#fcfcfc;box-shadow:1px 2px 7px rgba(0,0,0,.35);transform:rotate(-1deg)"><svg style="position:absolute;left:9px;top:11px" width="79" height="117" viewBox="0 0 100 150" preserveAspectRatio="none"><defs><filter id="fd"><feGaussianBlur stdDeviation="2.200"/></filter></defs><rect width="100" height="150" fill="#ddd0c2"/><g filter="url(#fd)"><rect x="0" y="0" width="20" height="150" fill="#8a6a52"/><rect x="84" y="0" width="16" height="150" fill="#c8b4a0"/><ellipse cx="54" cy="28" rx="20" ry="22" fill="#7a5238"/><ellipse cx="54" cy="36" rx="12" ry="16" fill="#efd6c8"/><path d="M20 150Q22 82 54 64Q88 82 90 150Z" fill="#a2aab8"/><path d="M34 56Q28 92 36 104L46 68ZM74 56Q80 92 72 104L62 68Z" fill="#7a5238"/></g></svg></div><div class="t" style="left:27px;top:260.5px;font-size:21.5px;color:#111;transform:scaleX(1.002);">—Who's that man / woman?</div><div class="t" style="left:27px;top:290.5px;font-size:21.5px;color:#111;transform:scaleX(0.947);">—He / She is …</div><svg class="a" style="left:296px;top:230px" width="176" height="124" viewBox="0 0 176 124"><path d="M12 40Q14 4 50 6Q84 6 86 36Q88 50 78 58L70 40Q48 30 30 42L24 66Q8 58 12 40Z" fill="#c23a14"/><path d="M12 40Q14 14 34 10Q20 26 24 66Q8 58 12 40Z" fill="#8a1c10"/><ellipse cx="50" cy="54" rx="26" ry="23" fill="#fce6d2"/><ellipse cx="40" cy="54" rx="4" ry="7" fill="#2a1a1a"/><ellipse cx="62" cy="54" rx="4" ry="7" fill="#2a1a1a"/><ellipse cx="52" cy="68" rx="4" ry="3" fill="#d83030"/><path d="M26 76H70L84 62 90 68 74 92V100H28L10 88 14 80Z" fill="#d4e2f8"/><path d="M28 98H72L70 112H30Z" fill="#d02818"/><ellipse cx="28" cy="117" rx="11" ry="6" fill="#8a1020"/><ellipse cx="66" cy="114" rx="11" ry="6" fill="#8a1020"/><path d="M94 42Q94 4 132 4Q168 4 170 40Q176 70 160 84L154 46Q132 34 112 46L106 70Q94 62 94 42Z" fill="#f03c7c"/><path d="M160 40Q176 60 162 86L152 64Z" fill="#e02868"/><ellipse cx="130" cy="56" rx="25" ry="23" fill="#fce6d2"/><ellipse cx="120" cy="56" rx="4" ry="7" fill="#2a1a1a"/><ellipse cx="141" cy="56" rx="4" ry="7" fill="#2a1a1a"/><ellipse cx="128" cy="70" rx="4" ry="3" fill="#d83030"/><path d="M112 80H148L160 104H100Z" fill="#e83a1a"/><path d="M96 68 112 78 108 86 92 76Z" fill="#f03c7c"/><ellipse cx="130" cy="104" rx="32" ry="7" fill="#e02c14"/><rect x="118" y="108" width="8" height="8" fill="#fce6d2"/><rect x="134" y="108" width="8" height="8" fill="#fce6d2"/><ellipse cx="122" cy="118" rx="10" ry="5" fill="#3442b4"/><ellipse cx="140" cy="118" rx="10" ry="5" fill="#3442b4"/></svg></div></div><div class="n" style="left:61.5px;top:314.1px">11</div><svg class="a" style="left:1px;top:316.8px" width="7" height="5.500" viewBox="0 0 14 11"><path d="M8 .5l1.700 3.500 3.800.4-2.800 2.600.8 3.800L8 8.800 4.500 10.800l.8-3.800L2.500 4.400l3.800-.4z" fill="none" stroke="#d8d8d8" stroke-width="1.300"/><path d="M0 2l3 1.500M0 5.500h2.500M0 9l2.500-1.200" stroke="#c8c8c8" stroke-width="1.100"/></svg>
<div class="s" style="left:136px;top:221px"><div class="in"><svg class="a" style="left:0;top:0" width="480" height="110" viewBox="0 0 480 110"><path d="M0 8C160 10 320 22 480 31V74C380 74 300 73 240 70C160 65 100 58 0 56Z" fill="#ebf5fd"/><path d="M0 8C160 10 320 22 480 31V66C380 65 300 63 240 59C160 53 100 43 0 40Z" fill="#cbe6f9"/><circle cx="34" cy="26" r="34" fill="#fff" opacity=".6"/><circle cx="452" cy="17.500" r="10.500" fill="#dceefa" stroke="#8cc2e4" stroke-width="6.500"/><circle cx="455" cy="14" r="4.500" fill="#fff"/><circle cx="425.500" cy="35.500" r="6.500" fill="#eef4fb" stroke="#9aa8d6" stroke-width="4.500"/><circle cx="428" cy="33" r="3" fill="#fff"/><circle cx="25" cy="16" r="14" fill="#fbd02e"/><circle cx="46" cy="27" r="11" fill="#f7c21c"/><circle cx="14" cy="24" r="6" fill="#fbd02e"/><circle cx="30" cy="22" r="4" fill="#a9b43a"/><circle cx="50" cy="28" r="4" fill="#b8a830"/><circle cx="21" cy="45" r="7.500" fill="#a4b030"/><circle cx="21" cy="45" r="3" fill="#d4d870"/></svg><div class="t" style="left:24px;top:17.4px;font-size:14px;color:#e8141c;font-weight:bold;font-style:italic;transform:scaleX(1.689);-webkit-text-stroke:1px #e8141c;">Practice</div><svg class="a" style="left:37px;top:50px" width="22" height="22" viewBox="0 0 22 22"><circle cx="11" cy="5.500" r="5" fill="#52be28"/><circle cx="11" cy="16.500" r="5" fill="#52be28"/><circle cx="5.500" cy="11" r="5" fill="#52be28"/><circle cx="16.500" cy="11" r="5" fill="#52be28"/><circle cx="11" cy="11" r="4" fill="#8be05a"/></svg><div class="t" style="left:64px;top:49.8px;font-size:21px;color:#5c9a92;transform:scaleX(0.999);border-bottom:2px dotted #f2d256;padding-bottom:0px;"><span style="color:#3fae3f">Let's play</span></div><svg class="a" style="left:0;top:0" width="480" height="360" viewBox="0 0 480 360"><rect x="153" y="81" width="188" height="140" fill="#f3f8fd"/><rect x="153" y="81" width="63" height="49.0" fill="#dcecf9"/><rect x="216" y="96" width="118" height="66" fill="#f6f9fb" stroke="#3c3c40" stroke-width="4"/><rect x="249.0" y="134.3" width="7" height="17.2" fill="#b4b4c0"/><rect x="260.8" y="129.0" width="7" height="22.4" fill="#a0b8a0"/><rect x="277.4" y="115.1" width="7" height="36.3" fill="#6a8a8a"/><rect x="296.2" y="118.4" width="7" height="33.0" fill="#4a9a6a"/><path d="M170 126Q189.0 100 208 126Q216 144.44 206 155.1H172Q162 144.44 170 126Z" fill="#6e2c1c"/><ellipse cx="192.0" cy="137.06" rx="13.5" ry="14.76" fill="#fbdcc6"/><path d="M168 155.1H210L228 146.07999999999998 230 152.64 212 169.04V192H168Z" fill="#e8344e"/><rect x="191" y="207" width="26" height="12" rx="4" fill="#e85a4a"/><circle cx="204" cy="197" r="16" fill="#b85a24"/><rect x="221" y="207" width="26" height="12" rx="4" fill="#333"/><circle cx="234" cy="197" r="16" fill="#1e1a1a"/><rect x="252" y="207" width="26" height="12" rx="4" fill="#e8a020"/><circle cx="265" cy="197" r="16" fill="#f8cc1c"/><rect x="284" y="207" width="26" height="12" rx="4" fill="#2a8a4a"/><circle cx="297" cy="197" r="16" fill="#1e1a1a"/></svg><svg class="a" style="left:0;top:0" width="480" height="360" viewBox="0 0 480 360"><rect x="153" y="232" width="192" height="119" fill="#f3f8fd"/><rect x="153" y="232" width="57" height="41.65" fill="#dcecf9"/><rect x="210" y="238" width="131" height="76" fill="#f6f9fb" stroke="#3c3c40" stroke-width="4"/><rect x="246.7" y="282.1" width="7" height="19.8" fill="#b4b4c0"/><rect x="259.8" y="276.0" width="7" height="25.8" fill="#a0b8a0"/><rect x="278.1" y="260.0" width="7" height="41.8" fill="#6a8a8a"/><rect x="299.1" y="263.8" width="7" height="38.0" fill="#4a9a6a"/><path d="M166 267Q183.5 241 201 267Q209 282.08 199 291.7H168Q158 282.08 166 267Z" fill="#6e2c1c"/><ellipse cx="186.32" cy="275.42" rx="12.690000000000001" ry="13.32" fill="#fbdcc6"/><path d="M164 291.7H203L221 283.56 223 289.48 205 304.28V325H164Z" fill="#e8344e"/><rect x="184" y="338" width="26" height="12" rx="4" fill="#e85a4a"/><circle cx="197" cy="328" r="16" fill="#b85a24"/><rect x="217" y="338" width="26" height="12" rx="4" fill="#333"/><circle cx="230" cy="328" r="16" fill="#1e1a1a"/><rect x="250" y="338" width="26" height="12" rx="4" fill="#e8a020"/><circle cx="263" cy="328" r="16" fill="#f8cc1c"/><rect x="284" y="338" width="26" height="12" rx="4" fill="#2a8a4a"/><circle cx="297" cy="328" r="16" fill="#1e1a1a"/></svg><div class="a" style="left:215px;top:57px;width:155px;height:44px;background:#a4a4a4;border:2.500px solid #2c2c2c;border-radius:9px;box-sizing:border-box;font-size:16px;line-height:18px;color:#111;text-align:center;display:flex;align-items:center;justify-content:center;-webkit-text-stroke:.25px #111;white-space:nowrap">Who's that woman?<br>Can you guess?</div><div class="a" style="left:37px;top:151px;width:118px;height:44px;background:#a4a4a4;border:2.500px solid #2c2c2c;border-radius:9px;box-sizing:border-box;font-size:16px;line-height:18px;color:#111;text-align:center;display:flex;align-items:center;justify-content:center;-webkit-text-stroke:.25px #111;white-space:nowrap">She's our<br>music teacher.</div><div class="a" style="left:62px;top:301px;width:152px;height:33px;background:#a4a4a4;border:2.500px solid #2c2c2c;border-radius:9px;box-sizing:border-box;font-size:16px;line-height:18px;color:#111;text-align:center;display:flex;align-items:center;justify-content:center;-webkit-text-stroke:.25px #111;white-space:nowrap">Oh, She's beautiful.</div></div></div><div class="n" style="left:195.5px;top:314.1px">12</div>
<div class="s" style="left:270px;top:221px"><div class="in"><svg class="a" style="left:0;top:0" width="480" height="110" viewBox="0 0 480 110"><path d="M0 8C160 10 320 22 480 31V74C380 74 300 73 240 70C160 65 100 58 0 56Z" fill="#ebf5fd"/><path d="M0 8C160 10 320 22 480 31V66C380 65 300 63 240 59C160 53 100 43 0 40Z" fill="#cbe6f9"/><circle cx="34" cy="26" r="34" fill="#fff" opacity=".6"/><circle cx="452" cy="17.500" r="10.500" fill="#dceefa" stroke="#8cc2e4" stroke-width="6.500"/><circle cx="455" cy="14" r="4.500" fill="#fff"/><circle cx="425.500" cy="35.500" r="6.500" fill="#eef4fb" stroke="#9aa8d6" stroke-width="4.500"/><circle cx="428" cy="33" r="3" fill="#fff"/><circle cx="25" cy="16" r="14" fill="#fbd02e"/><circle cx="46" cy="27" r="11" fill="#f7c21c"/><circle cx="14" cy="24" r="6" fill="#fbd02e"/><circle cx="30" cy="22" r="4" fill="#a9b43a"/><circle cx="50" cy="28" r="4" fill="#b8a830"/><circle cx="21" cy="45" r="7.500" fill="#a4b030"/><circle cx="21" cy="45" r="3" fill="#d4d870"/></svg><div class="t" style="left:24px;top:17.4px;font-size:14px;color:#e8141c;font-weight:bold;font-style:italic;transform:scaleX(1.689);-webkit-text-stroke:1px #e8141c;">Practice</div><svg class="a" style="left:37px;top:50px" width="22" height="22" viewBox="0 0 22 22"><circle cx="11" cy="5.500" r="5" fill="#52be28"/><circle cx="11" cy="16.500" r="5" fill="#52be28"/><circle cx="5.500" cy="11" r="5" fill="#52be28"/><circle cx="16.500" cy="11" r="5" fill="#52be28"/><circle cx="11" cy="11" r="4" fill="#8be05a"/></svg><div class="t" style="left:64px;top:49.8px;font-size:21px;color:#5c9a92;transform:scaleX(1.031);border-bottom:2px dotted #f2d256;padding-bottom:0px;">Let's chant</div><svg class="a" style="left:70px;top:78px" width="344" height="280" viewBox="0 0 344 280"><defs><radialGradient id="g1" cx=".14" cy=".42" r=".52"><stop offset="0" stop-color="#fca238"/><stop offset=".45" stop-color="#fcc468" stop-opacity=".9"/><stop offset="1" stop-color="#f8eeb0" stop-opacity="0"/></radialGradient><radialGradient id="g2" cx=".9" cy=".66" r=".48"><stop offset="0" stop-color="#54ecec"/><stop offset=".55" stop-color="#98f2e2" stop-opacity=".75"/><stop offset="1" stop-color="#d0f8d0" stop-opacity="0"/></radialGradient><radialGradient id="g3" cx=".5" cy="1" r=".55"><stop offset="0" stop-color="#b4f09c"/><stop offset="1" stop-color="#e0f8b8" stop-opacity="0"/></radialGradient><radialGradient id="g4" cx=".85" cy=".08" r=".42"><stop offset="0" stop-color="#ffffff"/><stop offset="1" stop-color="#ffffff" stop-opacity="0"/></radialGradient><filter id="b13"><feGaussianBlur stdDeviation="4"/></filter><clipPath id="c13"><rect x="5" y="5" width="330" height="258" rx="16"/></clipPath></defs><g clip-path="url(#c13)"><rect x="5" y="5" width="330" height="258" fill="#f8f2b0"/><rect x="5" y="5" width="330" height="258" fill="url(#g3)"/><rect x="5" y="5" width="330" height="258" fill="url(#g1)"/><rect x="5" y="5" width="330" height="258" fill="url(#g2)"/><rect x="5" y="5" width="330" height="258" fill="url(#g4)"/></g><g filter="url(#b13)" opacity=".85"><circle cx="158" cy="32" r="19" fill="none" stroke="#fff" stroke-width="11"/><circle cx="24" cy="62" r="16" fill="none" stroke="#f8b0dc" stroke-width="9"/><ellipse cx="46" cy="254" rx="34" ry="12" fill="#8af0f4"/></g><rect x="155" y="113" width="15" height="54" fill="#6fb2e2" stroke="#3d7fb8" stroke-width="2"/><circle cx="288" cy="219" r="18" fill="#173a7c" stroke="#0c2454" stroke-width="2"/><path d="M282 209 298 219 282 229Z" fill="#fff"/></svg><div class="t" style="left:0px;top:-0.6px;font-size:1px;color:#111;"></div></div></div><div class="n" style="left:329.5px;top:314.1px">13</div>
<div class="s" style="left:404px;top:221px"><div class="in"><svg class="a" style="left:0;top:0" width="480" height="110" viewBox="0 0 480 110"><path d="M0 8C160 10 320 22 480 31V74C380 74 300 73 240 70C160 65 100 58 0 56Z" fill="#ebf5fd"/><path d="M0 8C160 10 320 22 480 31V66C380 65 300 63 240 59C160 53 100 43 0 40Z" fill="#cbe6f9"/><circle cx="34" cy="26" r="34" fill="#fff" opacity=".6"/><circle cx="452" cy="17.500" r="10.500" fill="#dceefa" stroke="#8cc2e4" stroke-width="6.500"/><circle cx="455" cy="14" r="4.500" fill="#fff"/><circle cx="425.500" cy="35.500" r="6.500" fill="#eef4fb" stroke="#9aa8d6" stroke-width="4.500"/><circle cx="428" cy="33" r="3" fill="#fff"/><circle cx="25" cy="16" r="14" fill="#fbd02e"/><circle cx="46" cy="27" r="11" fill="#f7c21c"/><circle cx="14" cy="24" r="6" fill="#fbd02e"/><circle cx="30" cy="22" r="4" fill="#a9b43a"/><circle cx="50" cy="28" r="4" fill="#b8a830"/><circle cx="21" cy="45" r="7.500" fill="#a4b030"/><circle cx="21" cy="45" r="3" fill="#d4d870"/></svg><div class="t" style="left:34.5px;top:27.9px;font-size:14px;color:#e8141c;font-weight:bold;font-style:italic;transform:scaleX(1.505);-webkit-text-stroke:1px #e8141c;">Summary</div><svg class="a" style="left:0;top:0" width="480" height="360" viewBox="0 0 480 360"><rect x="35" y="74.5" width="420" height="250" rx="36" fill="none" stroke="#2e2e78" stroke-width="3.600" stroke-dasharray="9.500 7"/></svg><svg class="a" style="left:49px;top:96px" width="28" height="28" viewBox="0 0 26 26"><path d="M13 0l3.600 8 8.600.8-6.500 5.800 1.900 8.600L13 18.800l-7.600 4.400 1.900-8.600L.8 8.800 9.400 8z" fill="#58c838" stroke="#3a9a22" stroke-width="1"/><circle cx="13" cy="13" r="2.500" fill="#c8ec98"/></svg><div class="t" style="left:86px;top:101.3px;font-size:18.4px;color:#222;transform:scaleX(0.999);-webkit-text-stroke:.1px #222;">本课的重点单词：</div><div class="t" style="left:69px;top:138.6px;font-size:21.3px;color:#e8141c;transform:scaleX(1.000);">man &nbsp;woman &nbsp;that &nbsp;handsome &nbsp;beautiful</div><svg class="a" style="left:49px;top:174px" width="28" height="28" viewBox="0 0 26 26"><path d="M13 0l3.600 8 8.600.8-6.500 5.800 1.900 8.600L13 18.800l-7.600 4.400 1.900-8.600L.8 8.800 9.400 8z" fill="#58c838" stroke="#3a9a22" stroke-width="1"/><circle cx="13" cy="13" r="2.500" fill="#c8ec98"/></svg><div class="t" style="left:86px;top:179.3px;font-size:18.4px;color:#222;transform:scaleX(0.999);-webkit-text-stroke:.1px #222;">本课的重点句型：</div><div class="t" style="left:73px;top:214.6px;font-size:21.3px;color:#e8141c;transform:scaleX(0.993);">—Who's that man / woman?</div><div class="t" style="left:73px;top:246.6px;font-size:21.3px;color:#e8141c;transform:scaleX(1.001);">—He / She is my uncle /aunt.</div><div class="t" style="left:73px;top:279.6px;font-size:21.3px;color:#e8141c;transform:scaleX(0.988);">—He / She is handsome / beautiful.</div></div></div><div class="n" style="left:463.5px;top:314.1px">14</div><svg class="a" style="left:403px;top:316.8px" width="7" height="5.500" viewBox="0 0 14 11"><path d="M8 .5l1.700 3.500 3.800.4-2.800 2.600.8 3.800L8 8.800 4.500 10.800l.8-3.800L2.500 4.400l3.800-.4z" fill="none" stroke="#d8d8d8" stroke-width="1.300"/><path d="M0 2l3 1.500M0 5.500h2.500M0 9l2.500-1.200" stroke="#c8c8c8" stroke-width="1.100"/></svg>
<div class="s" style="left:538px;top:221px"><div class="in"><svg class="a" style="left:0;top:0" width="480" height="110" viewBox="0 0 480 110"><path d="M0 8C160 10 320 22 480 31V74C380 74 300 73 240 70C160 65 100 58 0 56Z" fill="#ebf5fd"/><path d="M0 8C160 10 320 22 480 31V66C380 65 300 63 240 59C160 53 100 43 0 40Z" fill="#cbe6f9"/><circle cx="34" cy="26" r="34" fill="#fff" opacity=".6"/><circle cx="452" cy="17.500" r="10.500" fill="#dceefa" stroke="#8cc2e4" stroke-width="6.500"/><circle cx="455" cy="14" r="4.500" fill="#fff"/><circle cx="425.500" cy="35.500" r="6.500" fill="#eef4fb" stroke="#9aa8d6" stroke-width="4.500"/><circle cx="428" cy="33" r="3" fill="#fff"/><circle cx="25" cy="16" r="14" fill="#fbd02e"/><circle cx="46" cy="27" r="11" fill="#f7c21c"/><circle cx="14" cy="24" r="6" fill="#fbd02e"/><circle cx="30" cy="22" r="4" fill="#a9b43a"/><circle cx="50" cy="28" r="4" fill="#b8a830"/><circle cx="21" cy="45" r="7.500" fill="#a4b030"/><circle cx="21" cy="45" r="3" fill="#d4d870"/></svg><div class="t" style="left:24px;top:15.9px;font-size:14px;color:#e8141c;font-weight:bold;font-style:italic;transform:scaleX(1.565);-webkit-text-stroke:1px #e8141c;">Homework</div><svg class="a" style="left:0;top:0" width="480" height="360" viewBox="0 0 480 360"><rect x="48" y="89.5" width="388" height="232" rx="33" fill="none" stroke="#2e2e78" stroke-width="3.600" stroke-dasharray="9.500 7"/></svg><svg class="a" style="left:22px;top:44px" width="76" height="76" viewBox="0 0 76 76"><path d="M4 40 38 34 72 40 70 68 38 74 6 68Z" fill="#3a9ee8"/><path d="M4 40 38 34 72 40 38 46Z" fill="#8fd0f8"/><path d="M38 46V74L6 68 4 40Z" fill="#56b4f0"/><path d="M38 40V18" stroke="#2a8a2a" stroke-width="3"/><path d="M38 22Q24 6 14 14Q22 26 38 22ZM38 18Q50 2 62 10Q54 22 38 18Z" fill="#3cb83c"/></svg><div class="t" style="left:69px;top:124.1px;font-size:15.3px;color:#333;transform:scaleX(1.020);-webkit-text-stroke:0;">1. 观看课文动画，按照正确的语音、语调朗读课文</div><div class="t" style="left:69px;top:163.1px;font-size:15.3px;color:#333;transform:scaleX(0.959);-webkit-text-stroke:0;">对话。</div><div class="t" style="left:69px;top:200.1px;font-size:15.3px;color:#333;transform:scaleX(1.020);-webkit-text-stroke:0;">2. 分角色读对话，并结合实际真实，编写一段新的</div><div class="t" style="left:69px;top:238.1px;font-size:15.3px;color:#333;transform:scaleX(0.973);-webkit-text-stroke:0;">对话，其中不少于6句话。</div><div class="t" style="left:69px;top:273.1px;font-size:15.3px;color:#333;transform:scaleX(0.989);-webkit-text-stroke:0;">3. 预习 <span class="r">Lesson10</span>。</div><svg class="a" style="left:386px;top:287px" width="62" height="58" viewBox="0 0 72 66"><ellipse cx="36" cy="58" rx="26" ry="6" fill="#d8d8d8"/><path d="M22 40Q36 48 52 40L50 58Q36 64 24 58Z" fill="#f6f6f6" stroke="#bbb" stroke-width="1"/><path d="M4 36Q6 4 36 4Q66 4 68 34Q52 48 36 48Q18 48 4 36Z" fill="#34cc2c"/><path d="M8 22Q20 2 44 4Q60 8 66 24" fill="none" stroke="#2a4a2a" stroke-width="2.500"/><ellipse cx="24" cy="18" rx="9" ry="5" fill="#fff"/><ellipse cx="48" cy="16" rx="9" ry="5" fill="#fff"/><ellipse cx="20" cy="34" rx="8" ry="5" fill="#fff"/><ellipse cx="44" cy="34" rx="9" ry="5" fill="#fff"/></svg></div></div><div class="n" style="left:597.5px;top:314.1px">15</div>
<div class="s" style="left:2px;top:330px"><div class="in"><div class="t" style="left:93px;top:54.0px;font-size:62px;color:#2278bc;font-family:"Noto Sans CJK SC",sans-serif;-webkit-text-stroke:1.800px #2278bc;">第</div><div class="t" style="left:163px;top:43.9px;font-size:76px;color:#f07a18;font-weight:bold;font-family:"DejaVu Serif","DejaVu Sans",sans-serif;-webkit-text-stroke:1.500px #f07a18;">1</div><div class="a" style="left:166px;top:113px;width:58px;height:5px;background:#f07a18;"></div><div class="t" style="left:231px;top:57.1px;font-size:55px;color:#2278bc;font-weight:bold;transform:scaleX(1.421) scaleY(1.14);font-family:"DejaVu Sans",sans-serif;-webkit-text-stroke:0;">PPT</div><div class="t" style="left:232px;top:108.4px;font-size:8px;color:#f07a18;font-weight:bold;transform:scaleX(0.936);-webkit-text-stroke:0;">WWW.1PPT.COM · FREE PPT MOBAN</div><div class="a" style="left:0px;top:158px;width:480px;height:71px;background:#1f3a6b;"></div><div class="t" style="left:29px;top:167.5px;font-size:13px;color:#fff;font-weight:bold;transform:scaleX(1.034);">可以在下列情况使用</div><div class="t" style="left:153px;top:161.4px;font-size:20px;color:#44d23c;font-weight:bold;">✔</div><div class="t" style="left:29px;top:188.1px;font-size:8.5px;color:#fff;font-weight:bold;transform:scaleX(0.962);-webkit-text-stroke:.2px #fff;">· 不限次数的用于您个人/公司、企业的商业演示。</div><div class="t" style="left:29px;top:202.1px;font-size:8.5px;color:#fff;font-weight:bold;transform:scaleX(0.925);-webkit-text-stroke:.2px #fff;">· 拷贝模板中的内容用于其它幻灯片母版中使用。</div><div class="t" style="left:246px;top:167.5px;font-size:13px;color:#fff;font-weight:bold;transform:scaleX(0.931);">不可以在以下情况使用</div><div class="t" style="left:378px;top:162.6px;font-size:18px;color:#f02828;font-weight:bold;">✖</div><div class="t" style="left:246px;top:188.1px;font-size:8.5px;color:#fff;font-weight:bold;transform:scaleX(0.974);-webkit-text-stroke:.2px #fff;">· 用于任何形式的在线付费下载。</div><div class="t" style="left:246px;top:202.1px;font-size:8.5px;color:#fff;font-weight:bold;transform:scaleX(1.020);-webkit-text-stroke:.2px #fff;">· 收集整理我们发布的免费资源后，刻录光碟销售。</div><div class="t" style="left:87px;top:243.4px;font-size:7px;color:#666;transform:scaleX(0.823);-webkit-text-stroke:0;">PPT模板下载：</div><div class="t" style="left:132px;top:243.4px;font-size:7px;color:#2424e4;font-weight:bold;transform:scaleX(0.948);-webkit-text-stroke:.3px #2424e4;text-decoration:underline;">www.1ppt.com/moban/</div><div class="t" style="left:250px;top:243.4px;font-size:7px;color:#666;transform:scaleX(0.867);-webkit-text-stroke:0;">PPT教程：</div><div class="t" style="left:298px;top:243.4px;font-size:7px;color:#2424e4;font-weight:bold;transform:scaleX(1.014);-webkit-text-stroke:.3px #2424e4;text-decoration:underline;">www.1ppt.com/powerpoint/</div><div class="t" style="left:87px;top:253.8px;font-size:7px;color:#666;transform:scaleX(0.823);-webkit-text-stroke:0;">行业PPT模板：</div><div class="t" style="left:132px;top:253.8px;font-size:7px;color:#2424e4;font-weight:bold;transform:scaleX(0.980);-webkit-text-stroke:.3px #2424e4;text-decoration:underline;">www.1ppt.com/hangye/</div><div class="t" style="left:250px;top:253.8px;font-size:7px;color:#666;transform:scaleX(0.904);-webkit-text-stroke:0;">Word教程：</div><div class="t" style="left:298px;top:253.8px;font-size:7px;color:#2424e4;font-weight:bold;transform:scaleX(1.004);-webkit-text-stroke:.3px #2424e4;text-decoration:underline;">www.1ppt.com/word/</div><div class="t" style="left:87px;top:264.2px;font-size:7px;color:#666;transform:scaleX(0.823);-webkit-text-stroke:0;">节日PPT模板：</div><div class="t" style="left:132px;top:264.2px;font-size:7px;color:#2424e4;font-weight:bold;transform:scaleX(1.069);-webkit-text-stroke:.3px #2424e4;text-decoration:underline;">www.1ppt.com/jieri/</div><div class="t" style="left:250px;top:264.2px;font-size:7px;color:#666;transform:scaleX(0.944);-webkit-text-stroke:0;">Excel教程：</div><div class="t" style="left:298px;top:264.2px;font-size:7px;color:#2424e4;font-weight:bold;transform:scaleX(1.077);-webkit-text-stroke:.3px #2424e4;text-decoration:underline;">www.1ppt.com/excel/</div><div class="t" style="left:87px;top:274.6px;font-size:7px;color:#666;transform:scaleX(0.823);-webkit-text-stroke:0;">PPT素材下载：</div><div class="t" style="left:132px;top:274.6px;font-size:7px;color:#2424e4;font-weight:bold;transform:scaleX(1.043);-webkit-text-stroke:.3px #2424e4;text-decoration:underline;">www.1ppt.com/sucai/</div><div class="t" style="left:250px;top:274.6px;font-size:7px;color:#666;transform:scaleX(0.971);-webkit-text-stroke:0;">资料下载：</div><div class="t" style="left:298px;top:274.6px;font-size:7px;color:#2424e4;font-weight:bold;transform:scaleX(1.134);-webkit-text-stroke:.3px #2424e4;text-decoration:underline;">www.1ppt.com/ziliao/</div><div class="t" style="left:87px;top:285.0px;font-size:7px;color:#666;transform:scaleX(0.823);-webkit-text-stroke:0;">PPT背景图片：</div><div class="t" style="left:132px;top:285.0px;font-size:7px;color:#2424e4;font-weight:bold;transform:scaleX(1.032);-webkit-text-stroke:.3px #2424e4;text-decoration:underline;">www.1ppt.com/beijing/</div><div class="t" style="left:250px;top:285.0px;font-size:7px;color:#666;transform:scaleX(0.864);-webkit-text-stroke:0;">PPT课件下载：</div><div class="t" style="left:298px;top:285.0px;font-size:7px;color:#2424e4;font-weight:bold;transform:scaleX(1.153);-webkit-text-stroke:.3px #2424e4;text-decoration:underline;">www.1ppt.com/kejian/</div><div class="t" style="left:87px;top:295.4px;font-size:7px;color:#666;transform:scaleX(0.823);-webkit-text-stroke:0;">PPT图表下载：</div><div class="t" style="left:132px;top:295.4px;font-size:7px;color:#2424e4;font-weight:bold;transform:scaleX(1.027);-webkit-text-stroke:.3px #2424e4;text-decoration:underline;">www.1ppt.com/tubiao/</div><div class="t" style="left:250px;top:295.4px;font-size:7px;color:#666;transform:scaleX(0.971);-webkit-text-stroke:0;">范文下载：</div><div class="t" style="left:298px;top:295.4px;font-size:7px;color:#2424e4;font-weight:bold;transform:scaleX(1.011);-webkit-text-stroke:.3px #2424e4;text-decoration:underline;">www.1ppt.com/fanwen/</div><div class="t" style="left:87px;top:305.8px;font-size:7px;color:#666;transform:scaleX(0.823);-webkit-text-stroke:0;">优秀PPT下载：</div><div class="t" style="left:132px;top:305.8px;font-size:7px;color:#2424e4;font-weight:bold;transform:scaleX(1.027);-webkit-text-stroke:.3px #2424e4;text-decoration:underline;">www.1ppt.com/xiazai/</div><div class="t" style="left:250px;top:305.8px;font-size:7px;color:#666;transform:scaleX(0.971);-webkit-text-stroke:0;">试卷下载：</div><div class="t" style="left:298px;top:305.8px;font-size:7px;color:#2424e4;font-weight:bold;transform:scaleX(1.009);-webkit-text-stroke:.3px #2424e4;text-decoration:underline;">www.1ppt.com/shiti/</div></div></div><div class="n" style="left:61.5px;top:423.1px">16</div>
</body></html>
